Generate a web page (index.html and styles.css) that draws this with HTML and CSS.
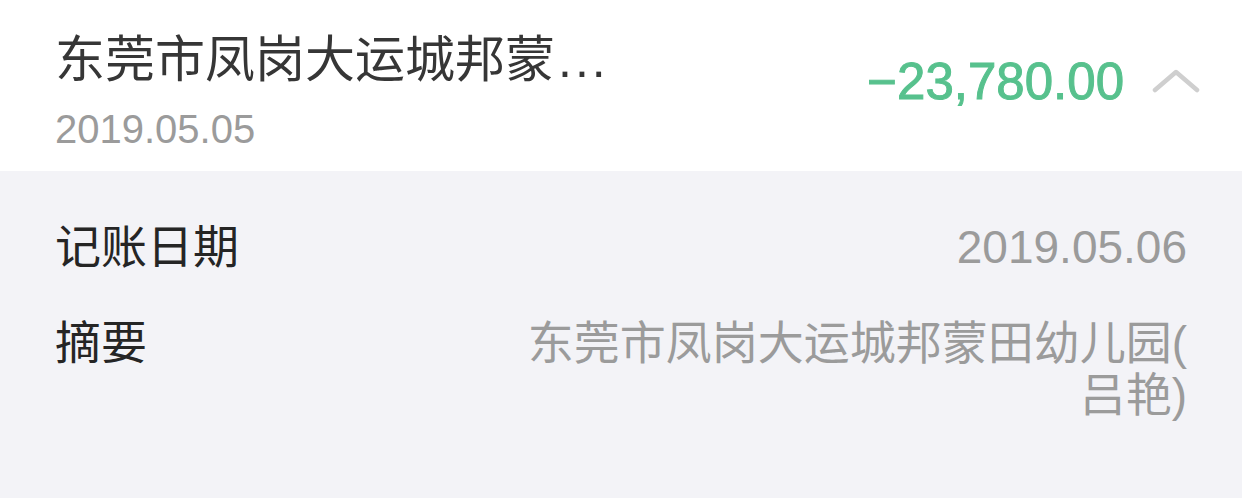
FILE: index.html
```html
<!DOCTYPE html>
<html>
  <head>
    <title>账单详情</title>
    <meta name="viewport" content="width=device-width, initial-scale=1.0" />
    <link rel="stylesheet" href="styles.css">
  </head>
  <body>
    <div class="bill">
      <div class="bill-header">
        <div class="bill-info">
          <h1 class="bill-title">东莞市凤岗大运城邦蒙<span class="dots">...</span></h1>
          <p class="bill-date">2019.05.05</p>
        </div>
        <div class="bill-amount">
          <span class="amount">&minus;23,780.00</span>
          <svg class="chevron" width="48" height="24" viewBox="0 0 48 24">
            <polyline points="3,21 24,3 45,21" fill="none" stroke="#cfcfcf" stroke-width="4.5" stroke-linecap="round" stroke-linejoin="round" />
          </svg>
        </div>
      </div>

      <div class="bill-details">
        <div class="detail-row">
          <span class="detail-label">记账日期</span>
          <span class="detail-value">2019.05.06</span>
        </div>
        <div class="detail-row">
          <span class="detail-label">摘要</span>
          <span class="detail-value">东莞市凤岗大运城邦蒙田幼儿园(<br>吕艳)</span>
        </div>
      </div>
    </div>
  </body>
</html>
```

FILE: styles.css
```css
body {
  margin: 0;
  background: #f3f3f7;
  font-family: "Liberation Sans", "Noto Sans CJK SC", sans-serif;
}
.bill {
  min-height: 100vh;
}
.bill-header {
  display: flex;
  justify-content: space-between;
  background: #fff;
  height: 171px;
  box-sizing: border-box;
  padding: 30px 42px 17px 55px;
}
.bill-title {
  margin: 0;
  font-size: 50px;
  font-weight: normal;
  line-height: 60px;
  color: #363636;
}
.dots {
  letter-spacing: 3px;
  margin-left: 3px;
}
.bill-date {
  margin: 14px 0 0;
  font-size: 40px;
  line-height: 50px;
  color: #9b9b9b;
}
.bill-amount {
  display: flex;
  align-items: center;
  align-self: flex-start;
  gap: 28px;
  margin-top: 21px;
  height: 60px;
}
.amount {
  font-size: 51px;
  color: #57c18d;
  -webkit-text-stroke: 1px #57c18d;
}
.chevron {
  display: block;
}
.bill-details {
  padding: 50px 55px 0;
  display: flex;
  flex-direction: column;
  gap: 44px;
}
.detail-row {
  display: flex;
  justify-content: space-between;
  font-size: 46px;
  line-height: 52px;
}
.detail-label {
  color: #252525;
}
.detail-value {
  color: #9b9b9b;
  text-align: right;
}
```
